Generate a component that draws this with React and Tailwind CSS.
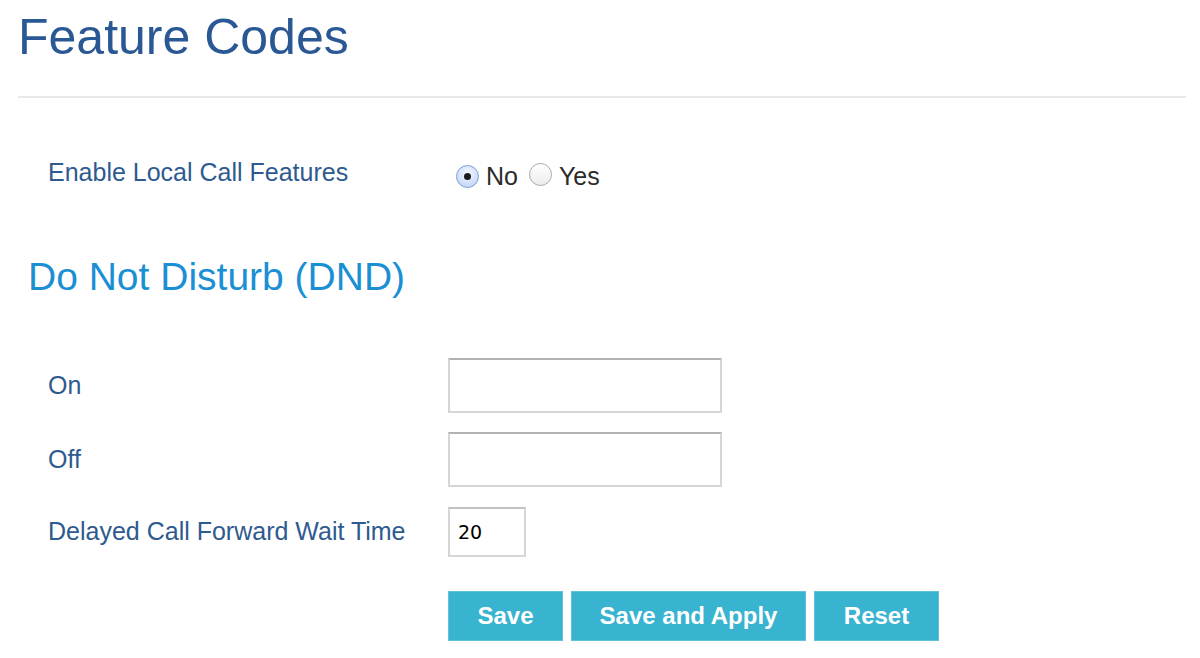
import React from "react";

function Radio({ checked }) {
  return (
    <span
      className={
        "relative inline-flex h-[23px] w-[23px] items-center justify-center rounded-full border " +
        (checked
          ? "border-[#7a9fd6] bg-[radial-gradient(circle_at_50%_35%,#f4f8ff,#b9cff3)]"
          : "border-[#a9a9a9] bg-[linear-gradient(#ffffff,#ececec)]")
      }
    >
      {checked && <span className="h-[7px] w-[7px] rounded-full bg-[#1b1b1b]" />}
    </span>
  );
}

function Field({ label, children }) {
  return (
    <div className="flex items-center">
      <div className="w-[400px] text-[25px] leading-[25px] text-[#2e5a90]">{label}</div>
      {children}
    </div>
  );
}

export default function App() {
  const font = { fontFamily: '"Liberation Sans", Arial, sans-serif' };
  return (
    <div className="h-[658px] w-[1200px] overflow-hidden bg-white" style={font}>
      <div className="pl-[18px] pr-[14px] pt-[12px]">
        <h1 className="text-[50px] font-normal leading-[50px] text-[#2a5894]">Feature Codes</h1>
        <div className="mt-[34px] h-[2px] bg-[#e9e9e9]" />
      </div>

      <div className="mt-[57px] flex items-center pl-[48px]">
        <div className="w-[408px] text-[25px] leading-[25px] text-[#2e5a90]">
          Enable Local Call Features
        </div>
        <label className="mt-[8px] flex items-center text-[25px] leading-[25px] text-[#2b2b2b]">
          <Radio checked />
          <span className="ml-[7px]">No</span>
          <span className="ml-[11px]">
            <Radio />
          </span>
          <span className="ml-[7px]">Yes</span>
        </label>
      </div>

      <h2 className="mt-[67px] pl-[28px] text-[39px] font-normal leading-[39px] text-[#1b8fd4]">
        Do Not Disturb (DND)
      </h2>

      <div className="mt-[62px] flex flex-col gap-[19px] pl-[48px]">
        <Field label="On">
          <input className="h-[55px] w-[274px] border-2 border-[#d6d6d6] border-t-[#b3b3b3] bg-white outline-none" />
        </Field>
        <Field label="Off">
          <input className="h-[55px] w-[274px] border-2 border-[#d6d6d6] border-t-[#b3b3b3] bg-white outline-none" />
        </Field>
        <Field label="Delayed Call Forward Wait Time">
          <input
            defaultValue="20"
            className="mt-[1px] h-[50px] w-[78px] border-2 border-[#d6d6d6] border-t-[#c2c2c2] bg-white px-[8px] text-[19px] text-black outline-none"
            style={{ fontFamily: '"DejaVu Sans", sans-serif' }}
          />
        </Field>
      </div>

      <div className="mt-[34px] flex gap-[8px] pl-[448px]">
        <button className="h-[50px] w-[115px] border border-[#5fc3dc] bg-[#38b3d0] text-[24px] font-bold text-white">
          Save
        </button>
        <button className="h-[50px] w-[235px] border border-[#5fc3dc] bg-[#38b3d0] text-[24px] font-bold text-white">
          Save and Apply
        </button>
        <button className="h-[50px] w-[125px] border border-[#5fc3dc] bg-[#38b3d0] text-[24px] font-bold text-white">
          Reset
        </button>
      </div>
    </div>
  );
}
